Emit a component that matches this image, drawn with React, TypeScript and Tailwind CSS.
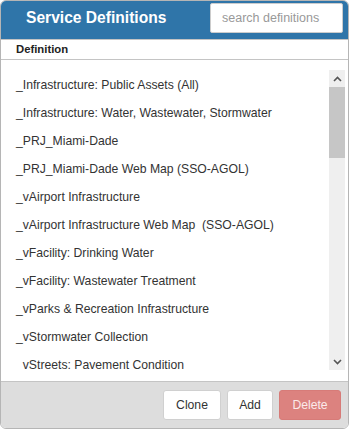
import React from "react";

const definitions = [
  "_Infrastructure: Public Assets (All)",
  "_Infrastructure: Water, Wastewater, Stormwater",
  "_PRJ_Miami-Dade",
  "_PRJ_Miami-Dade Web Map (SSO-AGOL)",
  "_vAirport Infrastructure",
  "_vAirport Infrastructure Web Map  (SSO-AGOL)",
  "_vFacility: Drinking Water",
  "_vFacility: Wastewater Treatment",
  "_vParks & Recreation Infrastructure",
  "_vStormwater Collection",
  "_vStreets: Pavement Condition",
];

const App: React.FC = () => {
  return (
    <div
      className="w-[349px] h-[429px] bg-white"
      style={{ fontFamily: '"Liberation Sans", Arial, sans-serif' }}
    >
      <div className="flex flex-col h-[429px] border border-[#b5b5b5] rounded-[6px] overflow-hidden">
        <div className="flex items-center justify-between h-[39px] shrink-0 bg-[#2f75a9] pl-[25px] pr-[5px] border-b border-[#c4c4c4]">
          <h2 className="text-[15.6px] font-bold text-white -mt-[4px]">Service Definitions</h2>
          <input
            className="w-[133px] h-[30px] -mt-[4px] bg-white border border-[#cccccc] rounded-[2px] px-[11px] text-[12.5px] text-[#555] placeholder:text-[#999] outline-none"
            placeholder="search definitions"
          />
        </div>
        <div className="h-[20px] shrink-0 border-b border-[#c4c4c4] pl-[15px] text-[11.3px] font-bold text-[#222] leading-[19px]">
          Definition
        </div>
        <div className="flex flex-col flex-1 min-h-0 bg-white pt-[10px] pb-[10px] pr-[3px]">
          <div className="flex h-[300px]">
            <ul className="flex-1 overflow-hidden pl-[15px] pt-[3px] text-[12.2px] text-[#333]">
              {definitions.map((d) => (
                <li key={d} className="h-[28px] leading-[24px] whitespace-pre">
                  {d}
                </li>
              ))}
            </ul>
            <div className="w-[16px] flex flex-col bg-[#efefef]">
              <div className="h-[17px] flex items-center justify-center">
                <svg width="9" height="6" viewBox="0 0 9 6">
                  <path d="M1 5 L4.5 1.5 L8 5" stroke="#555" strokeWidth="1.6" fill="none" />
                </svg>
              </div>
              <div className="h-[71px] bg-[#c6c6c6]" />
              <div className="flex-1" />
              <div className="h-[17px] flex items-center justify-center">
                <svg width="9" height="6" viewBox="0 0 9 6">
                  <path d="M1 1 L4.5 4.5 L8 1" stroke="#555" strokeWidth="1.6" fill="none" />
                </svg>
              </div>
            </div>
          </div>
        </div>
        <div className="h-[47px] shrink-0 bg-[#dddddd] border-t border-[#c4c4c4] flex items-center justify-end gap-[6px] pr-[7px]">
          <button className="h-[30px] w-[58px] bg-white border border-[#d0d0d0] rounded-[3px] text-[12.2px] text-[#333]">
            Clone
          </button>
          <button className="h-[30px] w-[46px] bg-white border border-[#d0d0d0] rounded-[3px] text-[12.2px] text-[#333]">
            Add
          </button>
          <button className="h-[30px] w-[62px] bg-[#dc827f] border border-[#d77b78] rounded-[3px] text-[12.2px] text-[#fbeaea]">
            Delete
          </button>
        </div>
      </div>
    </div>
  );
};

export default App;
